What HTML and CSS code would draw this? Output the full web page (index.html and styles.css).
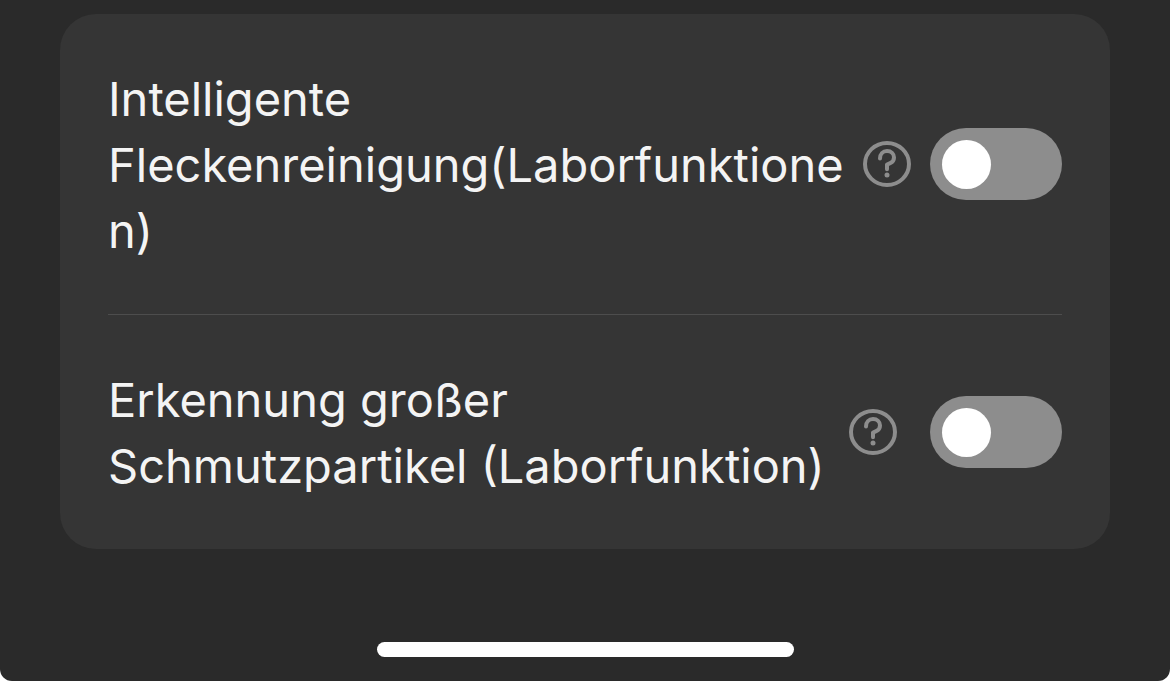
FILE: index.html
```
<!DOCTYPE html>
<html lang="de">
  <head>
    <meta charset="UTF-8">
    <meta name="viewport" content="width=device-width, initial-scale=1">
    <title>Laborfunktionen</title>
    <link rel="stylesheet" href="styles.css">
  </head>
  <body>
    <div class="screen">
      <form class="card">
        <div class="setting">
          <label class="setting-label" for="stain_cleaning">Intelligente Fleckenreinigung(Laborfunktionen)</label>
          <button type="button" class="help" aria-label="Hilfe">
            <svg viewBox="0 0 48 46" width="48" height="46" aria-hidden="true">
              <ellipse cx="24" cy="23" rx="22" ry="21"/>
              <path d="M17 17.5C17 13 20 10 24 10C28.2 10 31 12.8 31 16.5C31 19.5 29.5 21.2 27.2 22.2L24 23.6V28.2"/>
              <circle class="dot" cx="24" cy="34" r="2.5"/>
            </svg>
          </button>
          <input type="checkbox" class="switch" id="stain_cleaning" name="stain_cleaning">
        </div>
        <div class="setting">
          <label class="setting-label" for="large_particles">Erkennung großer<br>Schmutzpartikel (Laborfunktion)</label>
          <button type="button" class="help" aria-label="Hilfe">
            <svg viewBox="0 0 48 46" width="48" height="46" aria-hidden="true">
              <ellipse cx="24" cy="23" rx="22" ry="21"/>
              <path d="M17 17.5C17 13 20 10 24 10C28.2 10 31 12.8 31 16.5C31 19.5 29.5 21.2 27.2 22.2L24 23.6V28.2"/>
              <circle class="dot" cx="24" cy="34" r="2.5"/>
            </svg>
          </button>
          <input type="checkbox" class="switch" id="large_particles" name="large_particles">
        </div>
      </form>
      <div class="home-bar"></div>
    </div>
  </body>
</html>
```
FILE: styles.css
```
:root {
  --bg: #2a2a2a;
  --card: #353535;
  --line: #4d4d4d;
  --text: #f4f4f4;
  --grey: #8d8d8d;
}
* {
  box-sizing: border-box;
}
body {
  margin: 0;
  background: #fff;
  color: var(--text);
  font-family: Inter, "Liberation Sans", sans-serif;
}
.screen {
  display: flex;
  flex-direction: column;
  min-height: 100vh;
  padding: 14px 60px 24px;
  background: var(--bg);
  border-radius: 0 0 12px 12px;
}
.card {
  padding: 0 48px;
  background: var(--card);
  border-radius: 36px;
}
.setting {
  display: flex;
  align-items: center;
  padding: 50px 0;
}
.setting + .setting {
  border-top: 1px solid var(--line);
}
.setting-label {
  min-width: 76%;
  margin-right: 16px;
  padding-top: 2px;
  font-size: 47px;
  font-weight: 400;
  line-height: 66px;
  overflow-wrap: anywhere;
  cursor: pointer;
}
.help {
  flex: none;
  margin-right: 19px;
  padding: 0;
  border: 0;
  background: none;
  cursor: pointer;
}
.help svg {
  display: block;
  fill: none;
  stroke: var(--grey);
  stroke-width: 4;
  stroke-linecap: round;
  stroke-linejoin: round;
}
.help .dot {
  fill: var(--grey);
  stroke: none;
}
.switch {
  appearance: none;
  flex: none;
  display: flex;
  align-items: center;
  width: 132px;
  height: 72px;
  margin: 0 0 0 auto;
  padding: 0 12px;
  border-radius: 36px;
  background: var(--grey);
  cursor: pointer;
}
.switch::before {
  content: "";
  width: 49px;
  height: 49px;
  border-radius: 50%;
  background: #fff;
}
.switch:checked {
  justify-content: flex-end;
}
.home-bar {
  width: 40%;
  max-width: 417px;
  height: 15px;
  margin: auto auto 0;
  border-radius: 8px;
  background: #fff;
}
```
